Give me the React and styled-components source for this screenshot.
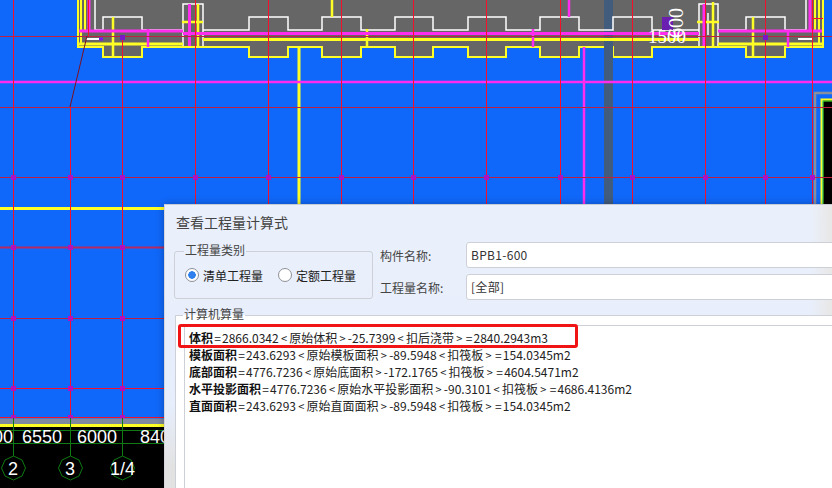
import React from 'react';
import styled, { createGlobalStyle } from 'styled-components';

const GlobalStyle = createGlobalStyle`
  html, body {
    margin: 0;
    padding: 0;
    background: #1068fa;
  }
  body {
    font-family: "Noto Sans CJK SC", "Noto Sans", sans-serif;
  }
`;

const RED = '#f5102c';
const RED_DIM = '#c0203f';
const YELLOW = '#ffff26';
const MAGENTA = '#ff2cf0';
const GREEN = '#0f7a12';

const gridX = [13.5, 70.5, 122.5, 195.5, 268.5, 341.5, 413.5, 486.5, 560.5, 632.5, 705.5, 765.5, 812.5];
const leftX = [13.5, 70.5, 122.5];
const leftRows = [247.5, 318.5, 388.5, 417.5];
const notches = [
  [249, 288],
  [322, 361],
  [395, 433],
  [468, 506],
  [540, 579],
  [613, 652],
];

// wall outlines, the notches repeat along the whole beam
const bottomEdge =
  'M78 0V47H103V57H142V47' +
  notches.map(([a, b]) => `H${a}V57H${b}V47`).join('') +
  'H746V57H785V47H823V0';
const topEdge =
  'M95 0V30H103V17H142V30H183M203 30' +
  notches.map(([a, b]) => `H${a}V17H${b}V30`).join('') +
  'H699M718 30H746V17H785V30H806V0';

function CadDrawing() {
  return (
    <CadLayer viewBox="0 0 832 488">
      <path d={bottomEdge} fill="#666666" stroke={YELLOW} strokeWidth="2" />
      <rect x="604" y="0" width="9" height="205" fill="#425c7e" />
      <path d={topEdge} fill="none" stroke="#ffffff" strokeWidth="1.5" />
      <path d="M183 46V4H203V46M699 46V4H718V46M708 13V35" fill="none" stroke="#ffffff" strokeWidth="1.5" />
      <path d="M86 39H100M798 39H812" stroke="#ffffff" strokeWidth="2" />
      <rect x="662" y="17" width="11" height="13" fill="#6a1fb0" />

      <g stroke={YELLOW} fill="none">
        <path d="M79 44H183M718 44H822M203 39.5H699" strokeWidth="3" />
        <path d="M81 0V44M85 0V30M815 0V30M819 0V44" strokeWidth="2" />
        <path d="M113 17V58M198 4V47M713 2V47M753 17V58M332 0V17M367 29V47" strokeWidth="2.5" />
        <path d="M182 22H203M697 22H719" strokeWidth="2.5" />
        <path d="M299 47V205" strokeWidth="3" />
        <path d="M0 208.5H164" strokeWidth="3" />
      </g>

      <g stroke={MAGENTA} fill="none">
        <path d="M79 31H183M718 31H822M183 33.5H699" strokeWidth="3" />
        <path d="M0 82H832" strokeWidth="2.5" />
        <path d="M89 0V30M189.5 4V46M704 4V46M810 0V30" strokeWidth="3" />
        <path d="M148 29V47M533 29V47M788 30V47" strokeWidth="2.5" />
        <path d="M569 0V17M584 47V205" strokeWidth="2.5" />
      </g>

      <g fill="none">
        <path d="M815 205V93H832" stroke="#8a8f9c" strokeWidth="2.5" />
        <rect x="823" y="100" width="9" height="110" fill="#000000" />
        <path d="M821.5 205V99.5H832" stroke={YELLOW} strokeWidth="2" />
        <path d="M823 205V101H832" stroke="#55ff33" strokeWidth="1" />
      </g>

      <g stroke={RED_DIM} strokeWidth="1">
        <path d="M0 36.5H832M0 107.5H832M0 177.5H832" />
        <path d="M0 247.5H164" strokeWidth="2" stroke="#b62a62" />
        <path d="M0 318.5H164" />
      </g>
      <path d="M0 388.5H164M0 417.5H164" stroke={RED} strokeWidth="1" />
      <path d="M70 107L87 36" stroke="#7d1020" strokeWidth="1" />
      <path d="M88.5 0V36M813 18.5H823" stroke={RED} strokeWidth="1" />
      {gridX.map((x) => (
        <line
          key={x}
          x1={x}
          x2={x}
          y1={x === 70.5 ? 107 : x === 122.5 ? 37 : 0}
          y2={x < 164 ? 417 : 205}
          stroke={RED}
          strokeWidth="1"
        />
      ))}

      {gridX.map((x) => (
        <rect key={x} x={x - 2.5} y="175" width="5" height="5" fill="#a812c8" />
      ))}
      {leftX.map((x) =>
        leftRows.map((y) => (
          <rect key={`${x}-${y}`} x={x - 2.5} y={y - 2.5} width="5" height="5" fill="#b010c0" />
        ))
      )}
      <rect x="120" y="35" width="5" height="5" fill="#7a18c8" />
      <rect x="763" y="35" width="5" height="5" fill="#7a18c8" />
      <rect x="99" y="37.5" width="4" height="3" fill="#7a18e8" />

      <rect x="0" y="418.5" width="164" height="5.5" fill="#7f8aa0" />
      <rect x="0" y="424" width="164" height="64" fill="#000000" />
      <path d="M0 425.5H164" stroke={YELLOW} strokeWidth="3" />
      <path d="M0 430.5H164M0 443.5H164" stroke={GREEN} strokeWidth="1" />
      <path d="M13.5 418V456M70.5 418V456M122.5 418V456" stroke={GREEN} strokeWidth="1" />
      <polygon points="13.5,456 22,460 25.5,468 22,476 13.5,480 5,476 1.5,468 5,460" fill="#000" stroke={GREEN} />
      <polygon points="70.5,456 79,460 82.5,468 79,476 70.5,480 62,476 58.5,468 62,460" fill="#000" stroke={GREEN} />
      <polygon points="122.5,456 131,460 134.5,468 131,476 122.5,480 114,476 110.5,468 114,460" fill="#000" stroke={GREEN} />

      <CadText x="-7" y="443" size="18">00</CadText>
      <CadText x="22" y="443" size="18">6550</CadText>
      <CadText x="77" y="443" size="18">6000</CadText>
      <CadText x="140" y="443" size="18">8400</CadText>
      <CadText x="8" y="475" size="18">2</CadText>
      <CadText x="65" y="475" size="18">3</CadText>
      <CadText x="110" y="475" size="18">1/4</CadText>
      <CadSerif x="648" y="43" size="19">1500</CadSerif>
      <CadSerif transform="translate(683 38) rotate(-90)" size="20">600</CadSerif>
    </CadLayer>
  );
}

const rows = [
  { label: '体积', text: '=2866.0342<原始体积>-25.7399<扣后浇带>=2840.2943m3' },
  { label: '模板面积', text: '=243.6293<原始模板面积>-89.5948<扣筏板>=154.0345m2' },
  { label: '底部面积', text: '=4776.7236<原始底面积>-172.1765<扣筏板>=4604.5471m2' },
  { label: '水平投影面积', text: '=4776.7236<原始水平投影面积>-90.3101<扣筏板>=4686.4136m2' },
  { label: '直面面积', text: '=243.6293<原始直面面积>-89.5948<扣筏板>=154.0345m2' },
];

// the symbols sit in wider cells than the digits in this dialog's font
function Formula({ text }) {
  return text.split(/([<>=])/).map((part, i) =>
    /^[<>=]$/.test(part) ? (
      <Symbol key={i} $wide={part !== '='}>
        {part}
      </Symbol>
    ) : (
      part
    )
  );
}

function App() {
  return (
    <Page>
      <GlobalStyle />
      <CadDrawing />
      <Dialog>
        <Title>查看工程量计算式</Title>
        <TopRow>
          <TypeGroup>
            <GroupLegend>工程量类别</GroupLegend>
            <RadioRow>
              <RadioItem>
                <Radio $checked />
                清单工程量
              </RadioItem>
              <RadioItem>
                <Radio />
                定额工程量
              </RadioItem>
            </RadioRow>
          </TypeGroup>
          <FieldColumn>
            <FieldRow>
              <FieldLabel>构件名称:</FieldLabel>
              <FieldInput>BPB1-600</FieldInput>
            </FieldRow>
            <FieldRow>
              <FieldLabel>工程量名称:</FieldLabel>
              <FieldInput>[全部]</FieldInput>
            </FieldRow>
          </FieldColumn>
        </TopRow>
        <CalcGroup>
          <GroupLegend>计算机算量</GroupLegend>
          <CalcText>
            <Highlight />
            {rows.map((row) => (
              <CalcLine key={row.label}>
                <b>{row.label}</b>
                <Formula text={row.text} />
              </CalcLine>
            ))}
          </CalcText>
        </CalcGroup>
      </Dialog>
    </Page>
  );
}

const Page = styled.div`
  position: relative;
  width: 832px;
  height: 488px;
  overflow: hidden;
  background: #1068fa;
`;

const CadLayer = styled.svg`
  position: absolute;
  inset: 0;
  width: 832px;
  height: 488px;
  display: block;
`;

const CadText = styled.text.attrs((p) => ({ fontSize: p.size }))`
  font-family: "Liberation Sans", sans-serif;
  fill: #ffffff;
`;

const CadSerif = styled.text.attrs((p) => ({ fontSize: p.size }))`
  font-family: "Liberation Serif", serif;
  fill: #ffffff;
`;

const Dialog = styled.section`
  position: absolute;
  left: 164px;
  top: 204px;
  right: -30px;
  bottom: 0;
  box-sizing: border-box;
  display: flex;
  flex-direction: column;
  padding: 0 0 0 9px;
  border-top: 1px solid #c9ccd4;
  border-left: 1px solid #d4d6dc;
  background:
    linear-gradient(90deg, rgba(232, 232, 232, 0) 646px, #e8e8e8 664px),
    linear-gradient(180deg, rgba(226, 226, 226, 0) 200px, #e2e2e2 262px),
    linear-gradient(180deg, #eaf0fb, #e5edfc);
  box-shadow: 0 0 8px rgba(0, 0, 0, 0.28);
`;

const Title = styled.div`
  height: 39px;
  padding-left: 2px;
  line-height: 35px;
  font-size: 14px;
  color: #444444;
`;

const TopRow = styled.div`
  display: flex;
  align-items: flex-start;
`;

const TypeGroup = styled.fieldset`
  box-sizing: border-box;
  width: 199px;
  height: 55px;
  margin: 0;
  padding: 8px 0 0 10px;
  border: 1px solid #cdd0d6;
  border-radius: 3px;
  min-width: 0;
`;

const GroupLegend = styled.legend`
  height: 14px;
  margin-left: -1px;
  padding: 0 1px;
  font-size: 12px;
  line-height: 12px;
  color: #444444;
`;

const RadioRow = styled.div`
  display: flex;
  gap: 15px;
`;

const RadioItem = styled.label`
  display: flex;
  align-items: center;
  gap: 4px;
  height: 18px;
  font-size: 12px;
  color: #222222;
`;

const Radio = styled.span`
  box-sizing: border-box;
  width: 14px;
  height: 14px;
  border: 1px solid #8e9096;
  border-radius: 50%;
  background: ${(p) =>
    p.$checked ? 'radial-gradient(circle, #2f80ed 0 3.5px, #ffffff 4px)' : '#ffffff'};
`;

const FieldColumn = styled.div`
  flex: 1;
  display: flex;
  flex-direction: column;
  gap: 6px;
  margin: -2px 0 0 7px;
`;

const FieldRow = styled.div`
  display: flex;
  align-items: center;
`;

const FieldLabel = styled.span`
  width: 86px;
  font-size: 12px;
  color: #444444;
`;

const FieldInput = styled.div`
  flex: 1;
  box-sizing: border-box;
  height: 26px;
  padding-left: 4px;
  line-height: 24px;
  font-size: 12px;
  letter-spacing: 0.3px;
  color: #333333;
  background: #ffffff;
  border: 1px solid #cdd0d6;
  border-radius: 3px;
`;

const CalcGroup = styled.fieldset`
  flex: 1;
  min-height: 0;
  min-width: 0;
  box-sizing: border-box;
  display: flex;
  margin: 8px 0 0 1px;
  padding: 3px 0 0 8px;
  background: #ffffff;
  border: 1px solid #cdd0d6;
  border-bottom: 0;
  border-right: 0;
`;

const CalcText = styled.div`
  position: relative;
  flex: 1;
  box-sizing: border-box;
  padding: 3px 0 0 4px;
  border-top: 1px solid #cdd0d6;
  border-left: 1px solid #cdd0d6;
`;

const CalcLine = styled.div`
  height: 17px;
  line-height: 17px;
  font-size: 12px;
  color: #222222;
  white-space: nowrap;

  b {
    font-weight: 700;
    color: #111111;
  }
`;

const Symbol = styled.span`
  display: inline-block;
  width: ${(p) => (p.$wide ? '10.6px' : '9px')};
  text-align: center;
  font-size: ${(p) => (p.$wide ? '11px' : '12px')};
`;

const Highlight = styled.div`
  position: absolute;
  left: -7px;
  top: -2px;
  width: 400px;
  height: 24px;
  box-sizing: border-box;
  border: 3px solid #f01414;
  border-radius: 3px;
`;

export default App;
